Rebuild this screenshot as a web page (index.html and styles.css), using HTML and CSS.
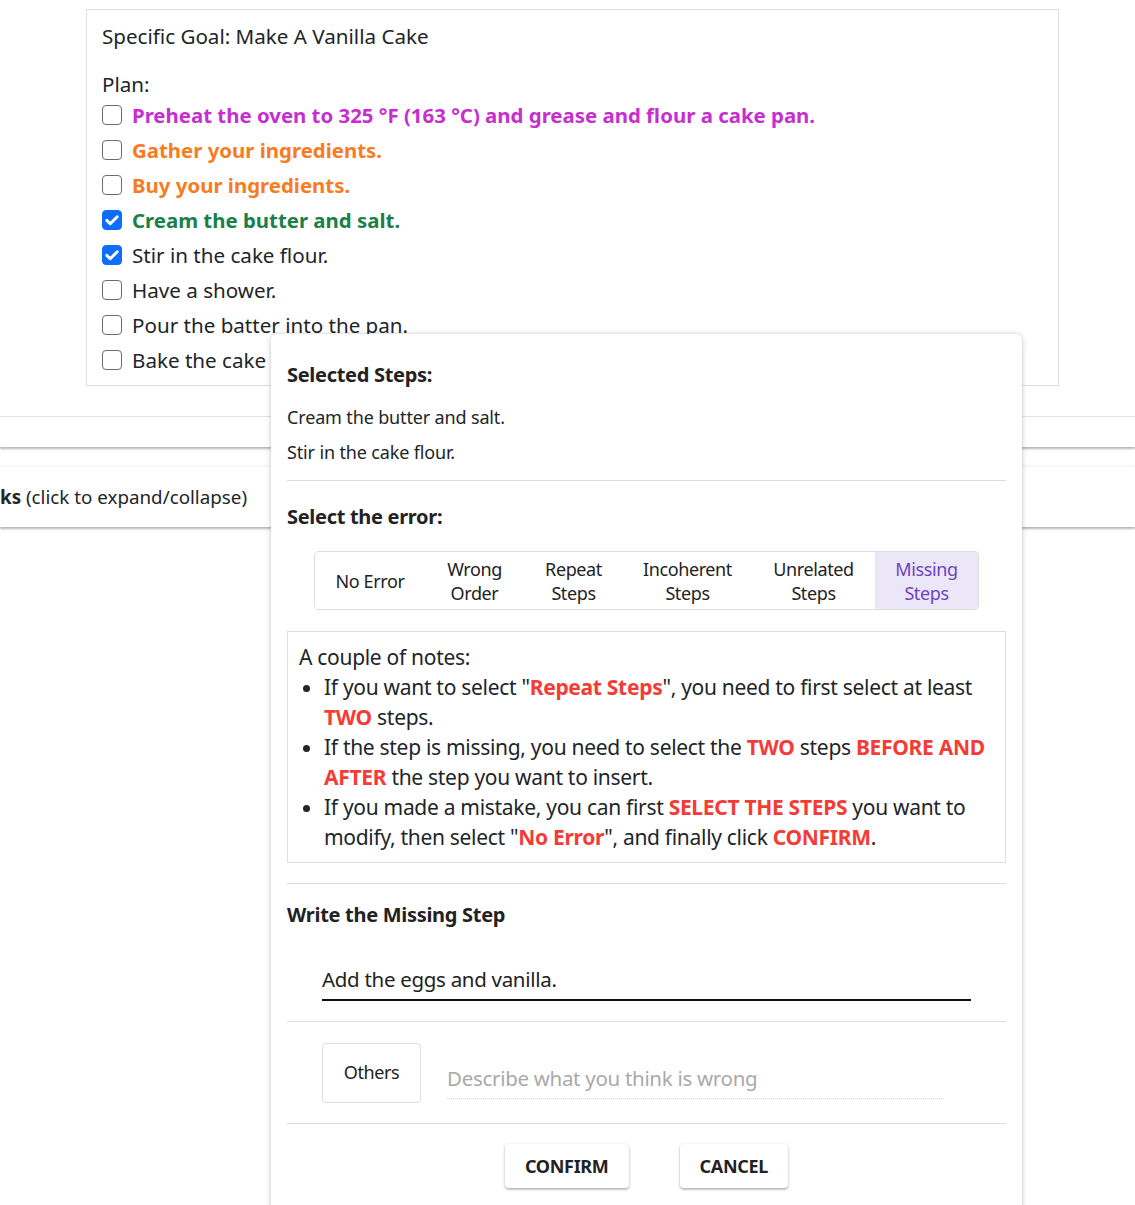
FILE: index.html
```html
<!DOCTYPE html>
<html>
<head>
<meta charset="utf-8">
<link rel="stylesheet" href="styles.css">
</head>
<body>
<div class="page">
  <div class="goal-card">
    <div class="goal">Specific Goal: Make A Vanilla Cake</div>
    <div class="plan-label">Plan:</div>
    <ul class="plan">
      <li><span class="cb"></span><span class="step magenta">Preheat the oven to 325 °F (163 °C) and grease and flour a cake pan.</span></li>
      <li><span class="cb"></span><span class="step orange">Gather your ingredients.</span></li>
      <li><span class="cb"></span><span class="step orange">Buy your ingredients.</span></li>
      <li><span class="cb checked"><svg viewBox="0 0 20 20" width="20" height="20"><path d="M4.8 10.4l3.4 3.4L15.2 6.8" fill="none" stroke="#fff" stroke-width="3" stroke-linecap="round" stroke-linejoin="round"/></svg></span><span class="step green">Cream the butter and salt.</span></li>
      <li><span class="cb checked"><svg viewBox="0 0 20 20" width="20" height="20"><path d="M4.8 10.4l3.4 3.4L15.2 6.8" fill="none" stroke="#fff" stroke-width="3" stroke-linecap="round" stroke-linejoin="round"/></svg></span><span class="step">Stir in the cake flour.</span></li>
      <li><span class="cb"></span><span class="step">Have a shower.</span></li>
      <li><span class="cb"></span><span class="step">Pour the batter into the pan.</span></li>
      <li><span class="cb"></span><span class="step">Bake the cake for 30 minutes.</span></li>
    </ul>
  </div>

  <div class="bar bar-top"></div>
  <div class="bar bar-acc"><span class="acc-text"><b>ks</b> (click to expand/collapse)</span></div>
</div>

<div class="popup">
  <h3 class="ptitle">Selected Steps:</h3>
  <p class="sel">Cream the butter and salt.</p>
  <p class="sel">Stir in the cake flour.</p>
  <hr class="sep">
  <h3 class="ptitle err-title">Select the error:</h3>
  <div class="toggle-wrap">
    <div class="toggle">
      <button class="tbtn w-noerr">No Error</button>
      <button class="tbtn w-wrong">Wrong<br>Order</button>
      <button class="tbtn w-repeat">Repeat<br>Steps</button>
      <button class="tbtn w-incoh">Incoherent<br>Steps</button>
      <button class="tbtn w-unrel">Unrelated<br>Steps</button>
      <button class="tbtn w-miss selected">Missing<br>Steps</button>
    </div>
  </div>
  <div class="notes">
    <div class="notes-head">A couple of notes:</div>
    <ul class="notes-list">
      <li>If you want to select "<b>Repeat Steps</b>", you need to first select at least <b>TWO</b> steps.</li>
      <li>If the step is missing, you need to select the <b>TWO</b> steps <b>BEFORE AND AFTER</b> the step you want to insert.</li>
      <li>If you made a mistake, you can first <b>SELECT THE STEPS</b> you want to modify, then select "<b>No Error</b>", and finally click <b>CONFIRM</b>.</li>
    </ul>
  </div>
  <hr class="sep sep2">
  <h3 class="ptitle missing-title">Write the Missing Step</h3>
  <div class="field">
    <div class="field-text">Add the eggs and vanilla.</div>
  </div>
  <hr class="sep sep3">
  <div class="others-row">
    <button class="others">Others</button>
    <div class="describe">Describe what you think is wrong</div>
  </div>
  <hr class="sep sep4">
  <div class="actions">
    <button class="act">CONFIRM</button>
    <button class="act">CANCEL</button>
  </div>
</div>
</body>
</html>
```

FILE: styles.css
```css
html, body {
  margin: 0;
  padding: 0;
  background: #fff;
  overflow: hidden;
  height: 1205px;
}
body {
  font-family: "Noto Sans", "Open Sans", sans-serif;
  color: #212529;
  position: relative;
}
.page {
  padding-top: 9px;
}
.goal-card {
  margin-left: 86px;
  width: 973px;
  height: 377px;
  box-sizing: border-box;
  border: 1px solid #dedede;
  padding: 12px 15px 0 15px;
  overflow: hidden;
}
.goal {
  font-size: 20.6px;
  line-height: 28px;
}
.plan-label {
  font-size: 20.6px;
  line-height: 26px;
  margin-top: 21px;
}
.plan {
  list-style: none;
  margin: 0;
  padding: 0;
}
.plan li {
  display: flex;
  align-items: center;
  height: 35px;
  font-size: 20.6px;
}
.cb {
  width: 20px;
  height: 20px;
  box-sizing: border-box;
  border: 1px solid #6c6c6c;
  border-radius: 4px;
  margin-right: 10px;
  flex: none;
  display: flex;
}
.cb.checked {
  background: #0d6efd;
  border-color: #0d6efd;
}
.cb svg { margin: -1px; }
.step { white-space: nowrap; }
.plan li .magenta, .plan li .orange, .plan li .green { font-size: 20.4px; }
.magenta { color: #c72ed0; font-weight: 700; }
.orange { color: #f97b1f; font-weight: 700; }
.green { color: #198049; font-weight: 700; }

.bar {
  width: 100%;
  background: #fff;
}
.bar-top {
  margin-top: 30px;
  height: 30px;
  border-top: 1px solid #e2e2e2;
  box-shadow: 0 2px 2px rgba(0,0,0,0.28);
}
.bar-acc {
  margin-top: 20px;
  height: 60px;
  box-shadow: 0 2px 2px rgba(0,0,0,0.28), 0 -1px 3px rgba(0,0,0,0.06);
  display: flex;
  align-items: center;
  font-size: 18.8px;
  color: #212529;
}
.acc-text { white-space: nowrap; }
.acc-text b { font-weight: 700; }

.popup {
  position: absolute;
  left: 271px;
  top: 334px;
  width: 751px;
  height: 900px;
  box-sizing: border-box;
  background: #fff;
  border-radius: 6px;
  box-shadow: 0 0 4px rgba(0,0,0,0.18), 0 2px 8px rgba(0,0,0,0.08);
  padding: 26px 16px 0 16px;
  color: #212529;
}
.ptitle {
  margin: 0;
  font-size: 20px;
  line-height: 30px;
  font-weight: 700;
  color: #222;
  letter-spacing: -0.3px;
}
.sel {
  margin: 0;
  font-size: 18px;
  line-height: 35px;
  letter-spacing: -0.15px;
}
.ptitle + .sel { margin-top: 10px; }
.sep {
  border: 0;
  border-top: 1px solid #dcdcdc;
  margin: 10px 0 0 0;
}
.err-title { margin-top: 21px; }
.toggle-wrap {
  padding: 19px 0 0 27px;
}
.toggle {
  display: inline-flex;
  border: 1px solid #dedede;
  border-radius: 4px;
  overflow: hidden;
  height: 59px;
  box-sizing: border-box;
}
.tbtn {
  border: 0;
  background: #fff;
  font-family: inherit;
  font-size: 18px;
  line-height: 24px;
  color: #222;
  letter-spacing: -0.4px;
  padding: 0;
  text-align: center;
}
.w-noerr { width: 110px; }
.w-wrong { width: 99px; }
.w-repeat { width: 99px; }
.w-incoh { width: 129px; }
.w-unrel { width: 123px; }
.w-miss { width: 103px; }
.tbtn.selected {
  background: #ebe6f8;
  color: #6f42c1;
}
.notes {
  margin-top: 21px;
  border: 1px solid #dedede;
  padding: 10px 11px 10px 11px;
  font-size: 21px;
  line-height: 30px;
  letter-spacing: -0.3px;
}
.notes-list {
  margin: 0;
  padding-left: 25px;
}
.notes-list b {
  color: #f53b35;
  font-weight: 700;
}
.sep2 { margin-top: 20px; }
.missing-title { margin-top: 16px; }
.field {
  margin: 35px 35px 0 35px;
  border-bottom: 2px solid #111;
  padding-bottom: 6px;
}
.field-text {
  font-size: 20.5px;
  line-height: 28px;
  color: #222;
  letter-spacing: -0.3px;
}
.sep3 { margin-top: 20px; }
.others-row {
  display: flex;
  align-items: flex-start;
  padding: 21px 0 0 35px;
  height: 60px;
}
.others {
  width: 99px;
  height: 60px;
  flex: none;
  border: 1px solid #dedede;
  border-radius: 4px;
  background: #fff;
  font-family: inherit;
  font-size: 18px;
  color: #222;
  letter-spacing: -0.4px;
  padding: 0 0 2px 0;
}
.describe {
  margin-left: 26px;
  margin-top: 21px;
  width: 497px;
  font-size: 20.5px;
  line-height: 28px;
  color: #a9a9a9;
  border-bottom: 1px dotted #d6d6d6;
  padding-bottom: 6px;
  letter-spacing: -0.3px;
}
.sep4 { margin-top: 20px; }
.actions {
  display: flex;
  justify-content: center;
  gap: 51px;
  padding-top: 20px;
}
.act {
  height: 44px;
  padding: 0 20px;
  border: 0;
  border-radius: 4px;
  background: #fff;
  font-family: inherit;
  font-size: 18px;
  font-weight: 700;
  color: #222;
  letter-spacing: -0.3px;
  box-shadow: 0 1px 3px rgba(0,0,0,0.25), 0 2px 2px rgba(0,0,0,0.12);
}
```
